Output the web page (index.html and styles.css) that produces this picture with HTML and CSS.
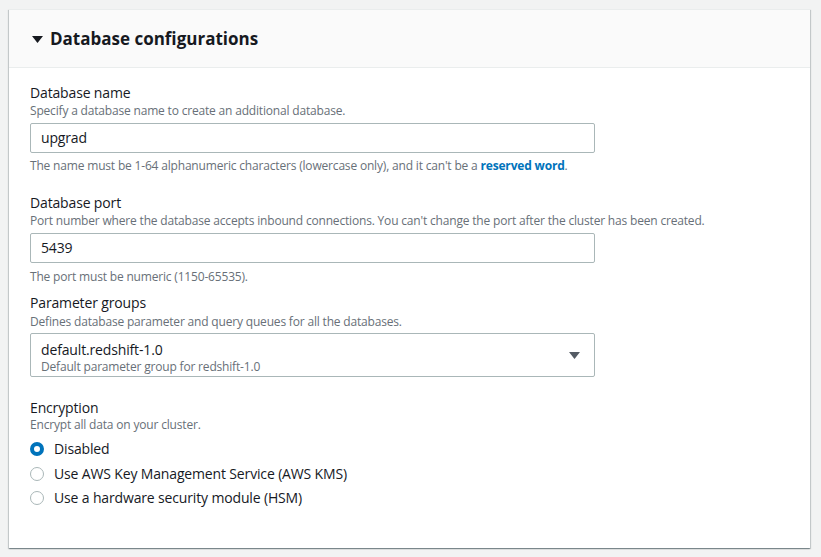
FILE: index.html
```html
<!DOCTYPE html>
<html>
<head>
<meta charset="utf-8">
<link rel="stylesheet" href="styles.css">
</head>
<body>
<div class="page">
  <section class="card">
    <header class="card-header">
      <svg class="caret" width="11" height="7" viewBox="0 0 11 7"><path d="M0 0 L11 0 L5.5 7 Z" fill="#16191f"/></svg>
      <h2>Database configurations</h2>
    </header>
    <div class="card-body">
      <div class="field field-name">
        <div class="label">Database name</div>
        <div class="desc">Specify a database name to create an additional database.</div>
        <div class="input">upgrad</div>
        <div class="constraint">The name must be 1-64 alphanumeric characters (lowercase only), and it can't be a <a class="link">reserved word</a>.</div>
      </div>
      <div class="field field-port">
        <div class="label">Database port</div>
        <div class="desc">Port number where the database accepts inbound connections. You can't change the port after the cluster has been created.</div>
        <div class="input">5439</div>
        <div class="constraint">The port must be numeric (1150-65535).</div>
      </div>
      <div class="field field-params">
        <div class="label">Parameter groups</div>
        <div class="desc">Defines database parameter and query queues for all the databases.</div>
        <div class="select">
          <div class="select-text">
            <div class="select-main">default.redshift-1.0</div>
            <div class="select-sub">Default parameter group for redshift-1.0</div>
          </div>
          <svg class="select-caret" width="11" height="7" viewBox="0 0 11 7"><path d="M0 0 L11 0 L5.5 7 Z" fill="#545b64"/></svg>
        </div>
      </div>
      <div class="field field-enc">
        <div class="label">Encryption</div>
        <div class="desc">Encrypt all data on your cluster.</div>
        <div class="radios">
          <label class="radio"><span class="dot checked"></span>Disabled</label>
          <label class="radio"><span class="dot"></span>Use AWS Key Management Service (AWS KMS)</label>
          <label class="radio"><span class="dot"></span>Use a hardware security module (HSM)</label>
        </div>
      </div>
    </div>
  </section>
</div>
</body>
</html>
```

FILE: styles.css
```css
html, body {
  margin: 0;
  padding: 0;
  background: #f2f3f3;
}
body {
  font-family: "Open Sans", "Noto Sans", sans-serif;
  color: #16191f;
}
.page {
  padding: 9px 11px 9px 9px;
}
.card {
  background: #fff;
  border-top: 1px solid #eaeded;
  box-shadow: 0 1px 1px 0 rgba(0, 28, 36, 0.3), 1px 1px 1px 0 rgba(0, 28, 36, 0.15), -1px 1px 1px 0 rgba(0, 28, 36, 0.15);
  height: 539px;
  box-sizing: border-box;
}
.card-header {
  background: #fafafa;
  border-bottom: 1px solid #eaeded;
  height: 58px;
  box-sizing: border-box;
  display: flex;
  align-items: center;
  padding-left: 23px;
  gap: 7px;
}
.caret {
  margin-top: 2px;
}
.card-header h2 {
  margin: 0;
  font-size: 17px;
  font-weight: 700;
  line-height: 22px;
}
.card-body {
  padding: 16px 21px 0 21px;
}
.label {
  font-size: 14px;
  line-height: 18px;
  letter-spacing: -0.15px;
}
.desc {
  font-size: 12px;
  line-height: 17px;
  color: #687078;
  letter-spacing: -0.18px;
}
.input {
  margin-top: 4px;
  width: 565px;
  height: 30px;
  box-sizing: border-box;
  border: 1px solid #aab7b8;
  border-radius: 2px;
  font-size: 14px;
  line-height: 28px;
  padding-left: 10px;
  letter-spacing: -0.15px;
}
.constraint {
  font-size: 12px;
  line-height: 16px;
  color: #687078;
  margin-top: 5px;
  letter-spacing: -0.18px;
}
.field-port .constraint {
  margin-top: 6px;
}
.field-name {
  margin-bottom: 20px;
}
.field-port {
  margin-bottom: 9px;
}
.field-params {
  margin-bottom: 22px;
}
.field-params .desc {
  line-height: 16px;
  margin-top: 2px;
}
.link {
  color: #0073bb;
  font-weight: 700;
}
.select {
  margin-top: 3px;
  width: 565px;
  height: 44px;
  box-sizing: border-box;
  border: 1px solid #aab7b8;
  border-radius: 2px;
  display: flex;
  align-items: center;
  justify-content: space-between;
  padding: 0 14px 0 10px;
}
.select-text {
  align-self: flex-start;
  padding-top: 6px;
}
.select-main {
  font-size: 14px;
  line-height: 19px;
  letter-spacing: -0.15px;
}
.select-sub {
  font-size: 12px;
  line-height: 16px;
  color: #687078;
  letter-spacing: -0.18px;
}
.select-caret {
  margin-top: 1px;
}
.field-enc .desc {
  line-height: 16px;
}
.radios {
  margin-top: 6px;
  display: flex;
  flex-direction: column;
  gap: 4.5px;
}
.radio {
  display: flex;
  align-items: center;
  gap: 10px;
  font-size: 14px;
  line-height: 20px;
  letter-spacing: -0.15px;
}
.dot {
  width: 14px;
  height: 14px;
  box-sizing: border-box;
  border-radius: 50%;
  border: 1px solid #aab7b8;
  background: #fff;
}
.dot.checked {
  border: 4px solid #0073bb;
}
```
